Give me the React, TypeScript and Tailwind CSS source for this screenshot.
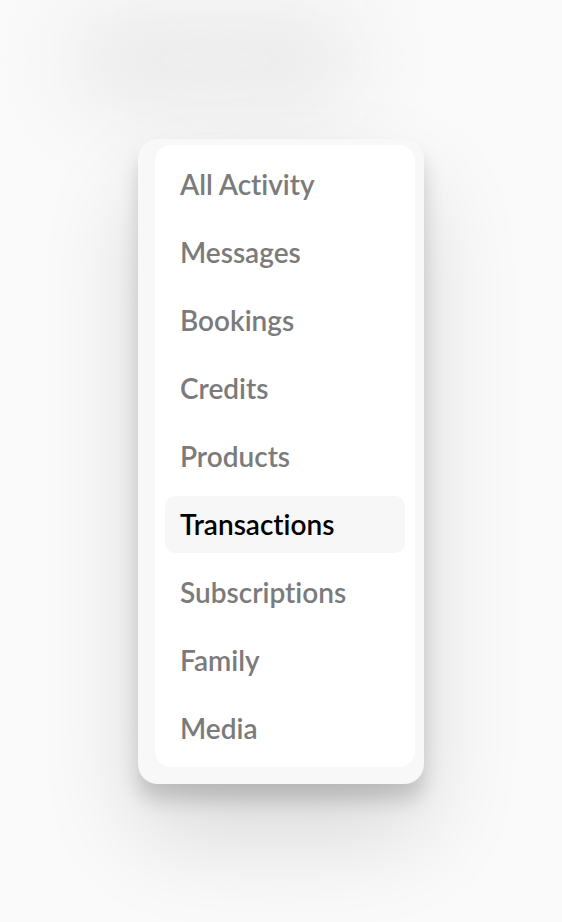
import React from 'react';

const items = [
  'All Activity',
  'Messages',
  'Bookings',
  'Credits',
  'Products',
  'Transactions',
  'Subscriptions',
  'Family',
  'Media',
];

// one row of the filter menu
const MenuItem: React.FC<{ label: string; active?: boolean }> = ({ label, active }) => (
  <li
    className={`h-[57px] flex items-center px-[15px] rounded-[10px] text-[28px] font-semibold [font-variant-ligatures:none] ${
      active ? 'bg-[#f7f7f7] text-black' : 'text-[#7b7b7b]'
    }`}
  >
    {label}
  </li>
);

export default function App() {
  return (
    <div
      className="relative min-h-screen overflow-hidden bg-[#fafafa] flex items-center justify-center"
      style={{ fontFamily: 'Lato, "Open Sans", sans-serif' }}
    >
      {/* soft blurred shadow blob in the background */}
      <div className="absolute left-[70px] top-[5px] w-[290px] h-[110px] rounded-full bg-[#ebebeb] blur-[40px]" />

      <div className="relative bg-[#f8f8f8] rounded-[20px] pl-[17px] pr-[9px] pt-[6px] pb-[17px] w-[286px] shadow-[0_16px_20px_rgba(0,0,0,0.17),0_50px_100px_rgba(0,0,0,0.14)]">
        <ul className="bg-white rounded-[16px] px-[10px] pt-[11px] pb-[10px] flex flex-col gap-[11px]">
          {items.map((label) => (
            <MenuItem key={label} label={label} active={label === 'Transactions'} />
          ))}
        </ul>
      </div>
    </div>
  );
}
